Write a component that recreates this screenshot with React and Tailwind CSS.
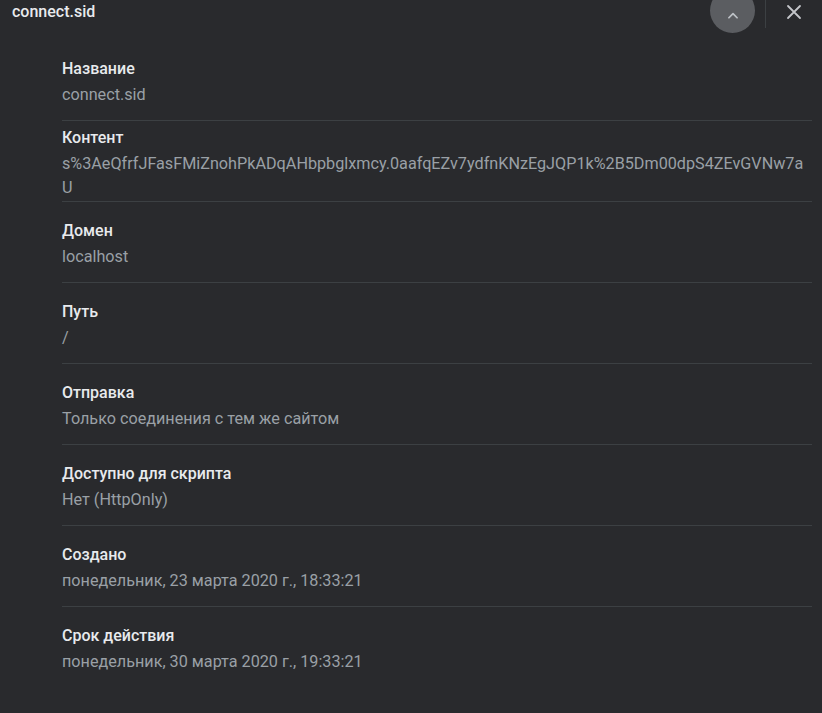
import React from 'react';

const rows = [
  { label: 'Название', value: 'connect.sid' },
  {
    label: 'Контент',
    value: 's%3AeQfrfJFasFMiZnohPkADqAHbpbglxmcy.0aafqEZv7ydfnKNzEgJQP1k%2B5Dm00dpS4ZEvGVNw7aU',
  },
  { label: 'Домен', value: 'localhost' },
  { label: 'Путь', value: '/' },
  { label: 'Отправка', value: 'Только соединения с тем же сайтом' },
  { label: 'Доступно для скрипта', value: 'Нет (HttpOnly)' },
  { label: 'Создано', value: 'понедельник, 23 марта 2020 г., 18:33:21' },
  { label: 'Срок действия', value: 'понедельник, 30 марта 2020 г., 19:33:21' },
];

export default function App() {
  return (
    <div className="min-h-[713px] w-[822px] overflow-hidden bg-[#292a2d] font-['Roboto',sans-serif]">
      {/* Header */}
      <div className="flex h-[40px] items-start">
        <div className="pl-3 pt-[1px] text-[16px] font-medium leading-[22px] text-[#e8eaed]">connect.sid</div>
        <div className="ml-auto flex items-start">
          <button className="-mt-[12px] mr-[10px] flex h-[45px] w-[45px] items-center justify-center rounded-full bg-[#5b5d61] pt-[10px]">
            <svg width="14" height="14" viewBox="0 0 24 24" fill="none" stroke="#bdc1c6" strokeWidth="3" strokeLinecap="round" strokeLinejoin="round">
              <path d="M5 15l7-7 7 7" />
            </svg>
          </button>
          <div className="h-[28px] w-px bg-[#3c4043]" />
          <button className="flex h-[24px] w-[56px] items-center justify-center">
            <svg width="16" height="16" viewBox="0 0 16 16" fill="none" stroke="#c4c6ca" strokeWidth="1.8" strokeLinecap="round">
              <path d="M2 2l12 12M14 2L2 14" />
            </svg>
          </button>
        </div>
      </div>

      {/* Properties */}
      <div className="ml-[62px] mr-[10px]">
        {rows.map((row, i) => (
          <div
            key={row.label}
            className={`flex min-h-[81px] flex-col justify-center pt-[3px] ${i < rows.length - 1 ? 'border-b border-[#3c4043]' : ''}`}
          >
            <div className="text-[16px] font-medium leading-6 text-[#e8eaed]">{row.label}</div>
            <div className="mt-[2px] break-all pr-1 text-[16.2px] leading-6 text-[#9aa0a6]">{row.value}</div>
          </div>
        ))}
      </div>
    </div>
  );
}
